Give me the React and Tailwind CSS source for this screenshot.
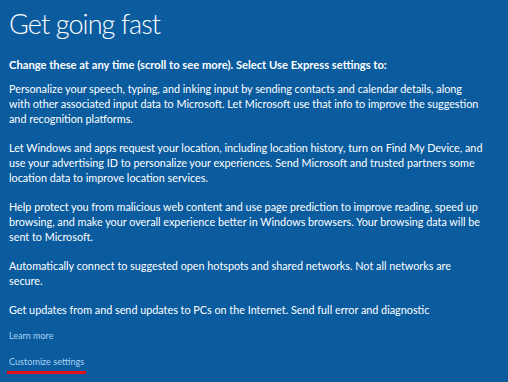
export default function App() {
  const body = "text-[10.8px] leading-[15px] text-white whitespace-nowrap";
  return (
    <div
      className="w-[508px] h-[382px] overflow-hidden bg-[#0a5c9f] pl-[9px] pt-[6px]"
      style={{ fontFamily: 'Lato, "Open Sans", sans-serif' }}
    >
      <h1 className="text-[27px] leading-[36px] font-light tracking-[-0.9px] text-white">Get going fast</h1>
      <p className="mt-[15px] text-[11.2px] leading-[15px] font-bold text-white whitespace-nowrap">
        Change these at any time (scroll to see more). Select Use Express settings to:
      </p>
      <div className="mt-[9px] flex flex-col gap-[14px]">
        <p className={body}>
          Personalize your speech, typing, and inking input by sending contacts and calendar details, along<br />
          with other associated input data to Microsoft. Let Microsoft use that info to improve the suggestion<br />
          and recognition platforms.
        </p>
        <p className={body}>
          Let Windows and apps request your location, including location history, turn on Find My Device, and<br />
          use your advertising ID to personalize your experiences. Send Microsoft and trusted partners some<br />
          location data to improve location services.
        </p>
        <p className={body}>
          Help protect you from malicious web content and use page prediction to improve reading, speed up<br />
          browsing, and make your overall experience better in Windows browsers. Your browsing data will be<br />
          sent to Microsoft.
        </p>
        <p className={body}>
          Automatically connect to suggested open hotspots and shared networks. Not all networks are<br />
          secure.
        </p>
        <p className={body}>
          Get updates from and send updates to PCs on the Internet. Send full error and diagnostic
        </p>
      </div>
      <div className="mt-[13px] text-[9px] leading-[12px] text-[#a9d3f5]">Learn more</div>
      <div className="mt-[14px] inline-flex flex-col">
        <span className="text-[9.1px] leading-[12px] text-[#a9d3f5]">Customize settings</span>
        <span className="mt-[3px] -ml-[2px] h-[3px] w-[79px] bg-[#e8101a]"></span>
      </div>
    </div>
  );
}
